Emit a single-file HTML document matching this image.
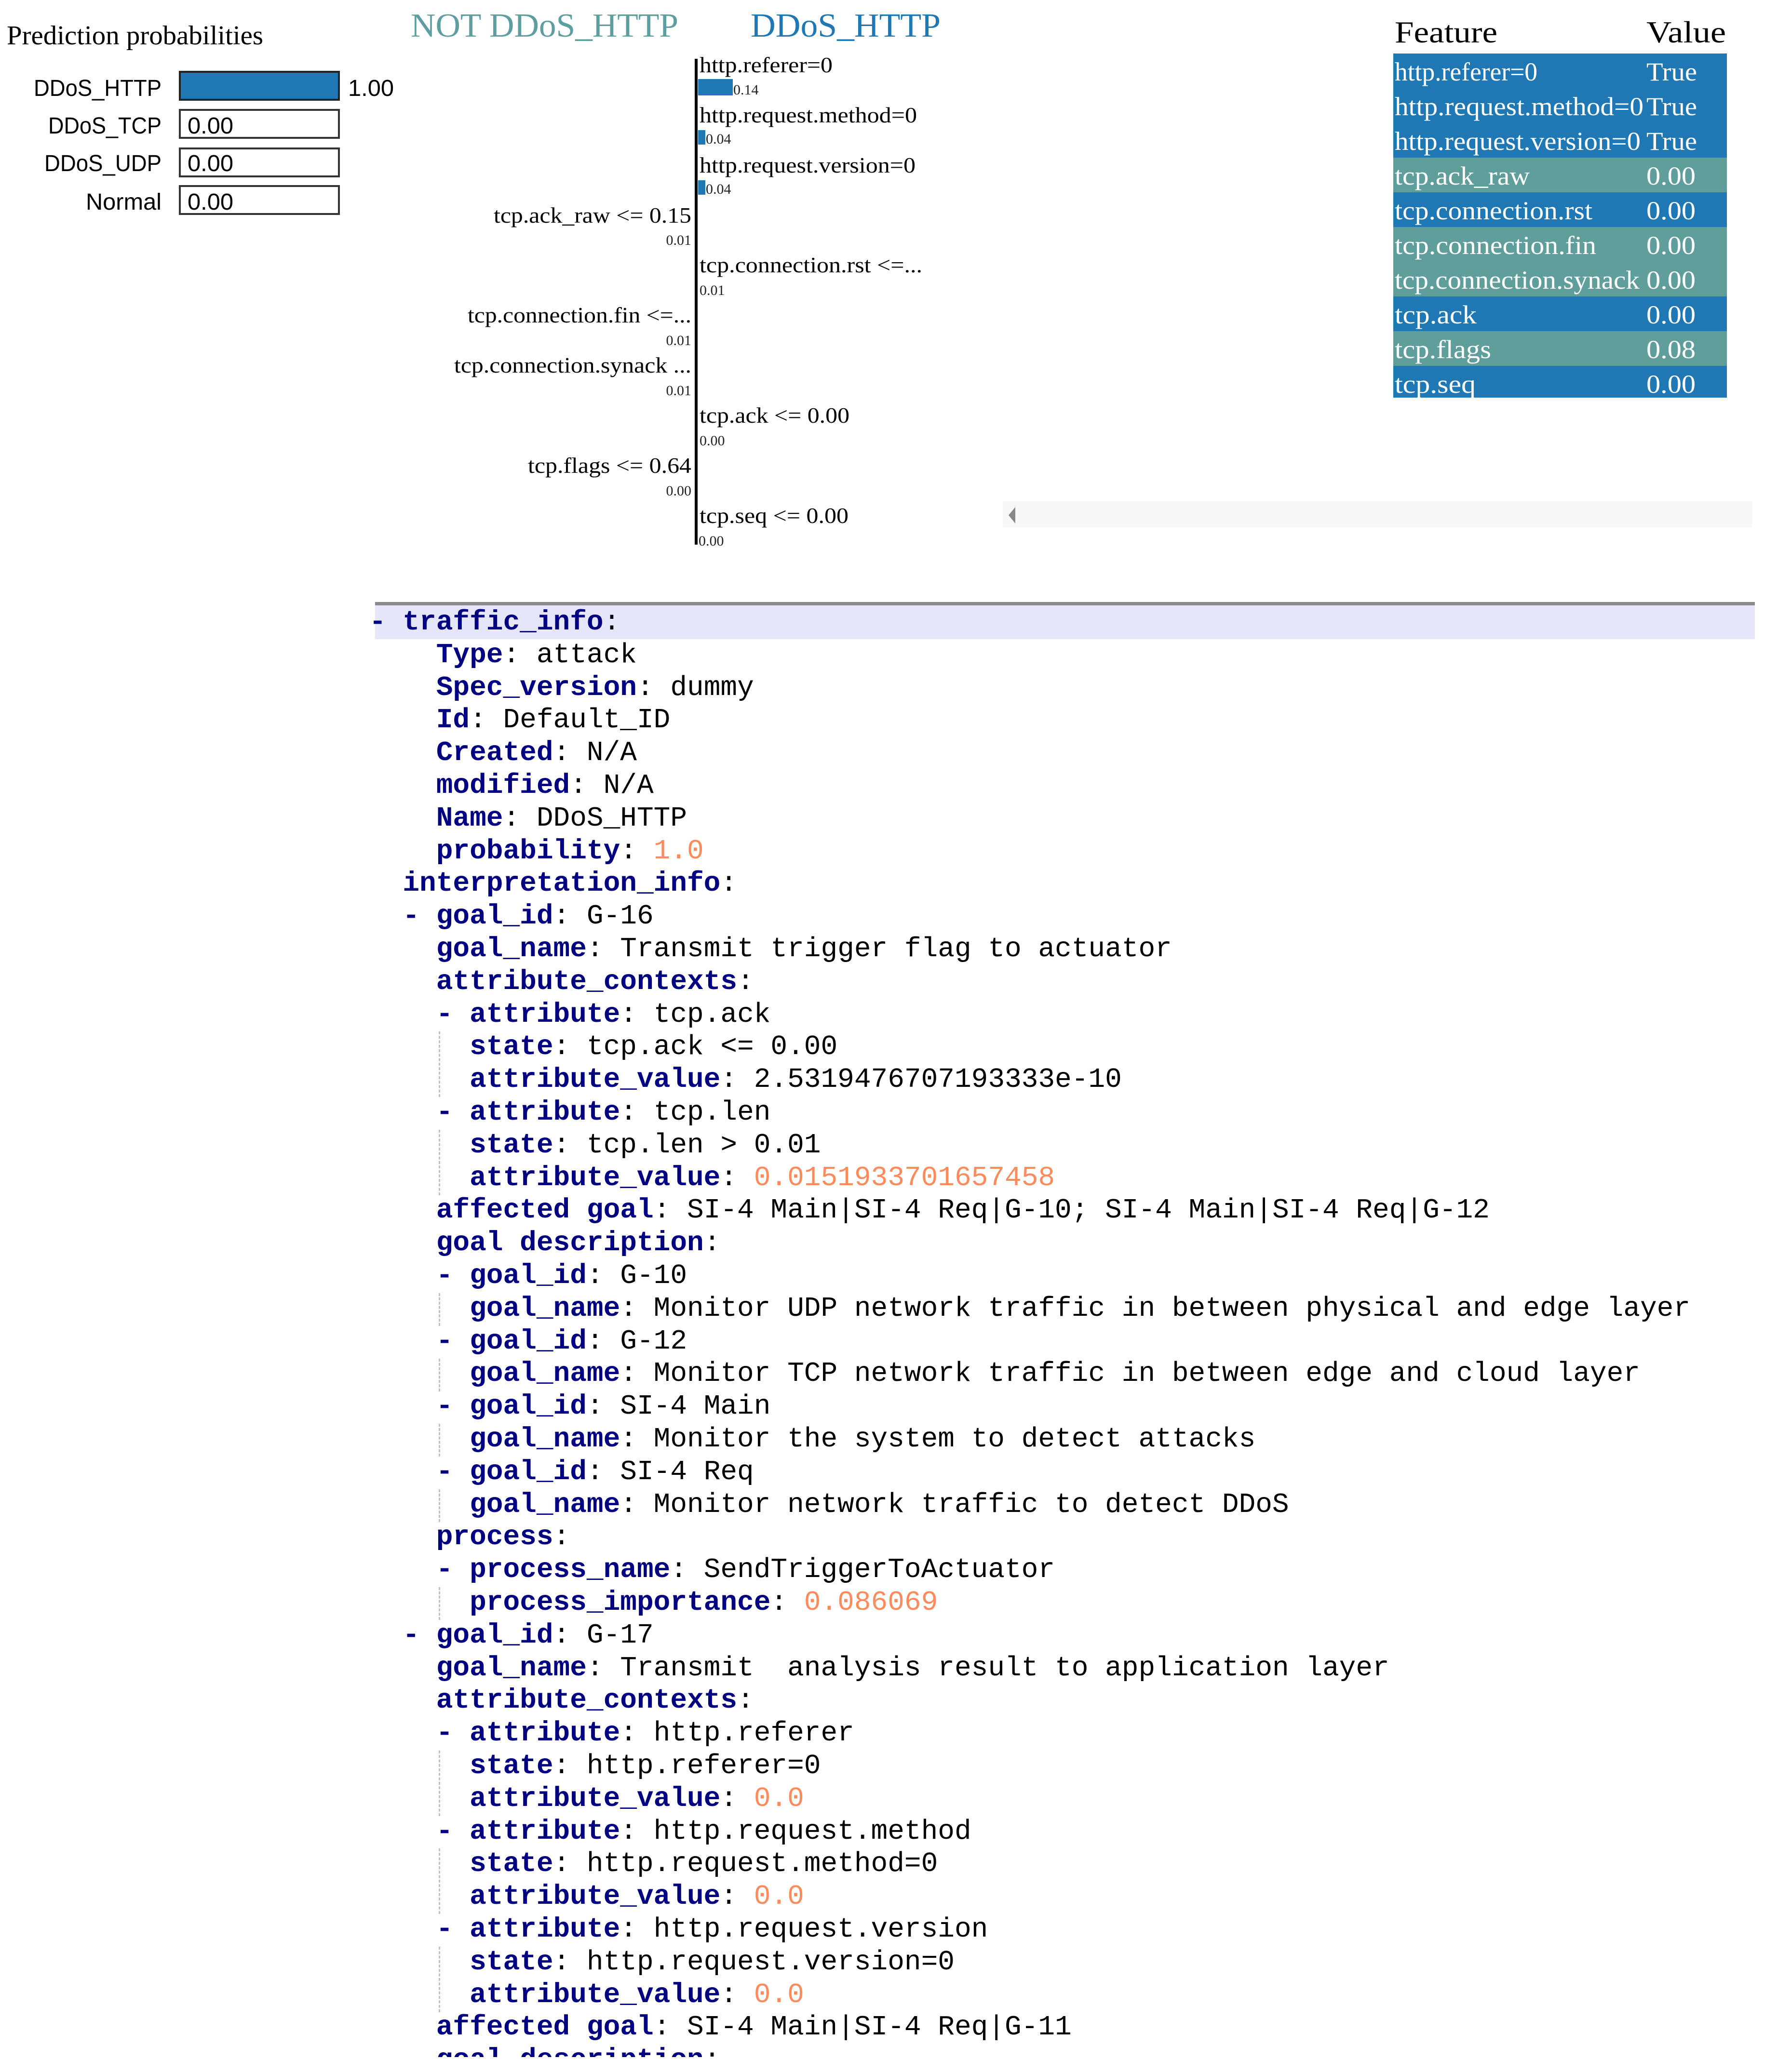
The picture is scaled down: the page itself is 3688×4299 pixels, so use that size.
<!DOCTYPE html>
<html><head><meta charset="utf-8"><style>
html,body{margin:0;padding:0;background:#fff;width:3688px;height:4299px;overflow:hidden;position:relative}
svg{position:absolute;left:0;top:0}
.y{position:absolute;left:766px;height:68px;line-height:68px;font-family:"Liberation Mono",monospace;font-size:57.8px;white-space:pre;color:#000}
.k{color:#000080;font-weight:bold}
.n{color:#ff8a5c}
.g{position:absolute;width:0;border-left:3px dashed #c0c0c0}
</style></head><body>
<svg width="3688" height="1240" xmlns="http://www.w3.org/2000/svg">
<text x="14" y="92" font-family="Liberation Serif,serif" font-size="56" textLength="532" lengthAdjust="spacingAndGlyphs">Prediction probabilities</text>
<g font-family="Liberation Sans,sans-serif" font-size="48" text-anchor="end">
<text x="335" y="199" textLength="265" lengthAdjust="spacingAndGlyphs">DDoS_HTTP</text>
<text x="335" y="277" textLength="235" lengthAdjust="spacingAndGlyphs">DDoS_TCP</text>
<text x="335" y="355" textLength="243" lengthAdjust="spacingAndGlyphs">DDoS_UDP</text>
<text x="335" y="435" textLength="157" lengthAdjust="spacingAndGlyphs">Normal</text>
</g>
<rect x="373" y="149" width="330" height="58" fill="#1f77b4" stroke="#222" stroke-width="4"/>
<rect x="373" y="228" width="330" height="58" fill="#fff" stroke="#333" stroke-width="4"/>
<rect x="373" y="308" width="330" height="58" fill="#fff" stroke="#333" stroke-width="4"/>
<rect x="373" y="386" width="330" height="58" fill="#fff" stroke="#333" stroke-width="4"/>
<g font-family="Liberation Sans,sans-serif" font-size="48">
<text x="722" y="199" textLength="95" lengthAdjust="spacingAndGlyphs">1.00</text>
<text x="389" y="277" textLength="95" lengthAdjust="spacingAndGlyphs">0.00</text>
<text x="389" y="355" textLength="95" lengthAdjust="spacingAndGlyphs">0.00</text>
<text x="389" y="435" textLength="95" lengthAdjust="spacingAndGlyphs">0.00</text>
</g>
<text x="852" y="76" font-family="Liberation Serif,serif" font-size="70" fill="#5f9ea0" textLength="555" lengthAdjust="spacingAndGlyphs">NOT DDoS_HTTP</text>
<text x="1557" y="76" font-family="Liberation Serif,serif" font-size="70" fill="#1f77b4" textLength="394" lengthAdjust="spacingAndGlyphs">DDoS_HTTP</text>
<rect x="1441" y="122" width="6" height="1008" fill="#000"/>
<rect x="1448" y="164" width="72" height="34" fill="#1f77b4"/>
<rect x="1448" y="270" width="15" height="30" fill="#1f77b4"/>
<rect x="1448" y="374" width="15" height="30" fill="#1f77b4"/>
<g font-family="Liberation Serif,serif" font-size="46">
<text x="1451" y="150" textLength="276" lengthAdjust="spacingAndGlyphs">http.referer=0</text>
<text x="1451" y="254" textLength="451" lengthAdjust="spacingAndGlyphs">http.request.method=0</text>
<text x="1451" y="358" textLength="448" lengthAdjust="spacingAndGlyphs">http.request.version=0</text>
<text x="1451" y="565" textLength="462" lengthAdjust="spacingAndGlyphs">tcp.connection.rst &lt;=...</text>
<text x="1451" y="877" textLength="311" lengthAdjust="spacingAndGlyphs">tcp.ack &lt;= 0.00</text>
<text x="1451" y="1085" textLength="309" lengthAdjust="spacingAndGlyphs">tcp.seq &lt;= 0.00</text>
</g>
<g font-family="Liberation Serif,serif" font-size="46" text-anchor="end">
<text x="1434" y="462" textLength="410" lengthAdjust="spacingAndGlyphs">tcp.ack_raw &lt;= 0.15</text>
<text x="1434" y="669" textLength="464" lengthAdjust="spacingAndGlyphs">tcp.connection.fin &lt;=...</text>
<text x="1434" y="773" textLength="492" lengthAdjust="spacingAndGlyphs">tcp.connection.synack ...</text>
<text x="1434" y="981" textLength="339" lengthAdjust="spacingAndGlyphs">tcp.flags &lt;= 0.64</text>
</g>
<g font-family="Liberation Serif,serif" font-size="30" fill="#222">
<text x="1521" y="196">0.14</text>
<text x="1464" y="298">0.04</text>
<text x="1464" y="402">0.04</text>
<text x="1451" y="612">0.01</text>
<text x="1451" y="924">0.00</text>
<text x="1449" y="1132">0.00</text>
</g>
<g font-family="Liberation Serif,serif" font-size="30" fill="#222" text-anchor="end">
<text x="1434" y="508">0.01</text>
<text x="1434" y="716">0.01</text>
<text x="1434" y="820">0.01</text>
<text x="1434" y="1028">0.00</text>
</g>
<g font-family="Liberation Serif,serif" font-size="64">
<text x="2893" y="88" textLength="213" lengthAdjust="spacingAndGlyphs">Feature</text>
<text x="3415" y="88" textLength="165" lengthAdjust="spacingAndGlyphs">Value</text>
</g>
<g>
<rect x="2890" y="111" width="692" height="72" fill="#1f77b4"/>
<rect x="2890" y="183" width="692" height="72" fill="#1f77b4"/>
<rect x="2890" y="255" width="692" height="72" fill="#1f77b4"/>
<rect x="2890" y="327" width="692" height="72" fill="#5f9e9a"/>
<rect x="2890" y="399" width="692" height="72" fill="#1f77b4"/>
<rect x="2890" y="471" width="692" height="72" fill="#5f9e9a"/>
<rect x="2890" y="543" width="692" height="72" fill="#5f9e9a"/>
<rect x="2890" y="615" width="692" height="72" fill="#1f77b4"/>
<rect x="2890" y="687" width="692" height="72" fill="#5f9e9a"/>
<rect x="2890" y="759" width="692" height="66" fill="#1f77b4"/>
</g>
<g font-family="Liberation Serif,serif" font-size="54" fill="#fff">
<text x="2893" y="167" textLength="296" lengthAdjust="spacingAndGlyphs">http.referer=0</text>
<text x="2893" y="239" textLength="516" lengthAdjust="spacingAndGlyphs">http.request.method=0</text>
<text x="2893" y="311" textLength="510" lengthAdjust="spacingAndGlyphs">http.request.version=0</text>
<text x="2893" y="383" textLength="280" lengthAdjust="spacingAndGlyphs">tcp.ack_raw</text>
<text x="2893" y="455" textLength="410" lengthAdjust="spacingAndGlyphs">tcp.connection.rst</text>
<text x="2893" y="527" textLength="418" lengthAdjust="spacingAndGlyphs">tcp.connection.fin</text>
<text x="2893" y="599" textLength="508" lengthAdjust="spacingAndGlyphs">tcp.connection.synack</text>
<text x="2893" y="671" textLength="170" lengthAdjust="spacingAndGlyphs">tcp.ack</text>
<text x="2893" y="743" textLength="200" lengthAdjust="spacingAndGlyphs">tcp.flags</text>
<text x="2893" y="815" textLength="168" lengthAdjust="spacingAndGlyphs">tcp.seq</text>
<text x="3415" y="167" textLength="105" lengthAdjust="spacingAndGlyphs">True</text>
<text x="3415" y="239" textLength="105" lengthAdjust="spacingAndGlyphs">True</text>
<text x="3415" y="311" textLength="105" lengthAdjust="spacingAndGlyphs">True</text>
<text x="3415" y="383" textLength="102" lengthAdjust="spacingAndGlyphs">0.00</text>
<text x="3415" y="455" textLength="102" lengthAdjust="spacingAndGlyphs">0.00</text>
<text x="3415" y="527" textLength="102" lengthAdjust="spacingAndGlyphs">0.00</text>
<text x="3415" y="599" textLength="102" lengthAdjust="spacingAndGlyphs">0.00</text>
<text x="3415" y="671" textLength="102" lengthAdjust="spacingAndGlyphs">0.00</text>
<text x="3415" y="743" textLength="102" lengthAdjust="spacingAndGlyphs">0.08</text>
<text x="3415" y="815" textLength="102" lengthAdjust="spacingAndGlyphs">0.00</text>
</g>
<rect x="2080" y="1040" width="1555" height="54" fill="#f8f8f8"/>
<polygon points="2106,1052 2106,1086 2092,1069" fill="#888"/>
</svg>
<div style="position:absolute;left:778px;top:1249px;width:2862px;height:7px;background:#8a8a8a"></div>
<div style="position:absolute;left:778px;top:1256px;width:2862px;height:70px;background:#e6e6fa"></div>
<div class="g" style="left:910px;top:2140px;height:136px"></div>
<div class="g" style="left:910px;top:2344px;height:136px"></div>
<div class="g" style="left:910px;top:2683px;height:68px"></div>
<div class="g" style="left:910px;top:2819px;height:68px"></div>
<div class="g" style="left:910px;top:2954px;height:68px"></div>
<div class="g" style="left:910px;top:3090px;height:68px"></div>
<div class="g" style="left:910px;top:3293px;height:68px"></div>
<div class="g" style="left:910px;top:3632px;height:136px"></div>
<div class="g" style="left:910px;top:3835px;height:136px"></div>
<div class="g" style="left:910px;top:4039px;height:136px"></div>
<div class="y" style="top:1258px"><span class="k">- traffic_info</span>:</div>
<div class="y" style="top:1326px">    <span class="k">Type</span>: attack</div>
<div class="y" style="top:1394px">    <span class="k">Spec_version</span>: dummy</div>
<div class="y" style="top:1461px">    <span class="k">Id</span>: Default_ID</div>
<div class="y" style="top:1529px">    <span class="k">Created</span>: N/A</div>
<div class="y" style="top:1597px">    <span class="k">modified</span>: N/A</div>
<div class="y" style="top:1665px">    <span class="k">Name</span>: DDoS_HTTP</div>
<div class="y" style="top:1733px">    <span class="k">probability</span>: <span class="n">1.0</span></div>
<div class="y" style="top:1800px">  <span class="k">interpretation_info</span>:</div>
<div class="y" style="top:1868px">  <span class="k">- goal_id</span>: G-16</div>
<div class="y" style="top:1936px">    <span class="k">goal_name</span>: Transmit trigger flag to actuator</div>
<div class="y" style="top:2004px">    <span class="k">attribute_contexts</span>:</div>
<div class="y" style="top:2072px">    <span class="k">- attribute</span>: tcp.ack</div>
<div class="y" style="top:2139px">      <span class="k">state</span>: tcp.ack &lt;= 0.00</div>
<div class="y" style="top:2207px">      <span class="k">attribute_value</span>: 2.5319476707193333e-10</div>
<div class="y" style="top:2275px">    <span class="k">- attribute</span>: tcp.len</div>
<div class="y" style="top:2343px">      <span class="k">state</span>: tcp.len &gt; 0.01</div>
<div class="y" style="top:2411px">      <span class="k">attribute_value</span>: <span class="n">0.0151933701657458</span></div>
<div class="y" style="top:2478px">    <span class="k">affected goal</span>: SI-4 Main|SI-4 Req|G-10; SI-4 Main|SI-4 Req|G-12</div>
<div class="y" style="top:2546px">    <span class="k">goal description</span>:</div>
<div class="y" style="top:2614px">    <span class="k">- goal_id</span>: G-10</div>
<div class="y" style="top:2682px">      <span class="k">goal_name</span>: Monitor UDP network traffic in between physical and edge layer</div>
<div class="y" style="top:2750px">    <span class="k">- goal_id</span>: G-12</div>
<div class="y" style="top:2817px">      <span class="k">goal_name</span>: Monitor TCP network traffic in between edge and cloud layer</div>
<div class="y" style="top:2885px">    <span class="k">- goal_id</span>: SI-4 Main</div>
<div class="y" style="top:2953px">      <span class="k">goal_name</span>: Monitor the system to detect attacks</div>
<div class="y" style="top:3021px">    <span class="k">- goal_id</span>: SI-4 Req</div>
<div class="y" style="top:3089px">      <span class="k">goal_name</span>: Monitor network traffic to detect DDoS</div>
<div class="y" style="top:3156px">    <span class="k">process</span>:</div>
<div class="y" style="top:3224px">    <span class="k">- process_name</span>: SendTriggerToActuator</div>
<div class="y" style="top:3292px">      <span class="k">process_importance</span>: <span class="n">0.086069</span></div>
<div class="y" style="top:3360px">  <span class="k">- goal_id</span>: G-17</div>
<div class="y" style="top:3428px">    <span class="k">goal_name</span>: Transmit  analysis result to application layer</div>
<div class="y" style="top:3495px">    <span class="k">attribute_contexts</span>:</div>
<div class="y" style="top:3563px">    <span class="k">- attribute</span>: http.referer</div>
<div class="y" style="top:3631px">      <span class="k">state</span>: http.referer=0</div>
<div class="y" style="top:3699px">      <span class="k">attribute_value</span>: <span class="n">0.0</span></div>
<div class="y" style="top:3767px">    <span class="k">- attribute</span>: http.request.method</div>
<div class="y" style="top:3834px">      <span class="k">state</span>: http.request.method=0</div>
<div class="y" style="top:3902px">      <span class="k">attribute_value</span>: <span class="n">0.0</span></div>
<div class="y" style="top:3970px">    <span class="k">- attribute</span>: http.request.version</div>
<div class="y" style="top:4038px">      <span class="k">state</span>: http.request.version=0</div>
<div class="y" style="top:4106px">      <span class="k">attribute_value</span>: <span class="n">0.0</span></div>
<div class="y" style="top:4173px">    <span class="k">affected goal</span>: SI-4 Main|SI-4 Req|G-11</div>
<div class="y" style="top:4241px">    <span class="k">goal description</span>:</div>
<div style="position:absolute;left:0;top:4268px;width:3688px;height:40px;background:#fff"></div>
</body></html>
